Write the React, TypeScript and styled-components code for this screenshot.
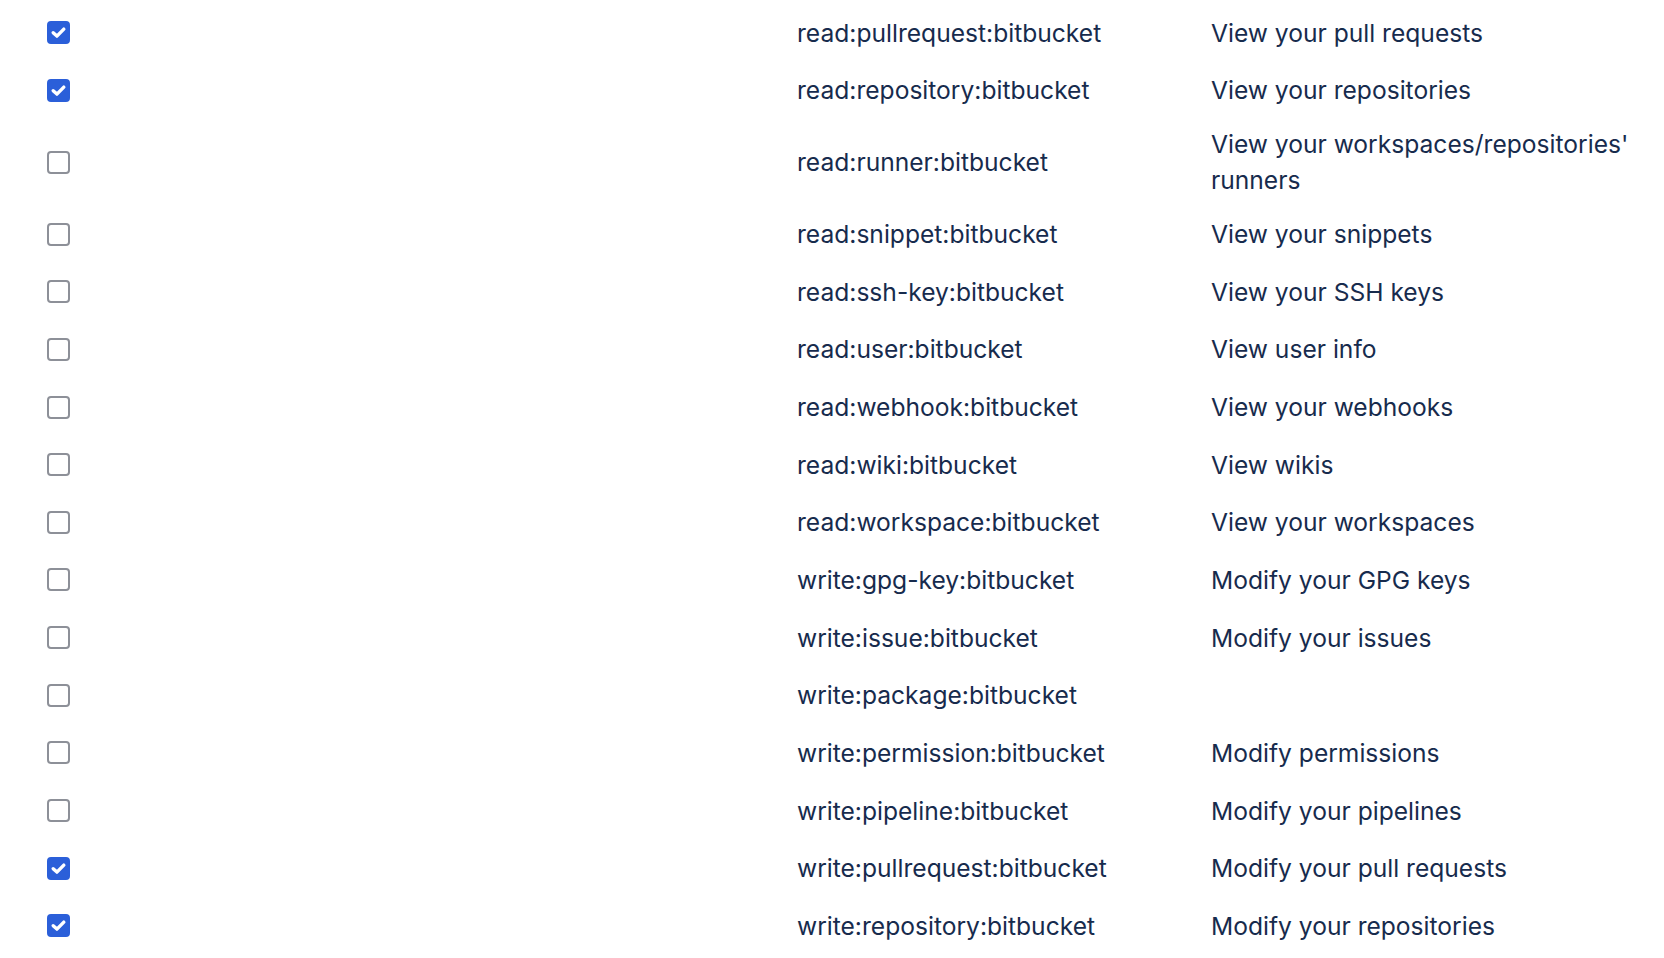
import React from 'react'
import styled, { createGlobalStyle } from 'styled-components'

interface Scope {
  name: string
  description?: string
  checked: boolean
}

const scopes: Scope[] = [
  { name: 'read:pullrequest:bitbucket', description: 'View your pull requests', checked: true },
  { name: 'read:repository:bitbucket', description: 'View your repositories', checked: true },
  { name: 'read:runner:bitbucket', description: "View your workspaces/repositories' runners", checked: false },
  { name: 'read:snippet:bitbucket', description: 'View your snippets', checked: false },
  { name: 'read:ssh-key:bitbucket', description: 'View your SSH keys', checked: false },
  { name: 'read:user:bitbucket', description: 'View user info', checked: false },
  { name: 'read:webhook:bitbucket', description: 'View your webhooks', checked: false },
  { name: 'read:wiki:bitbucket', description: 'View wikis', checked: false },
  { name: 'read:workspace:bitbucket', description: 'View your workspaces', checked: false },
  { name: 'write:gpg-key:bitbucket', description: 'Modify your GPG keys', checked: false },
  { name: 'write:issue:bitbucket', description: 'Modify your issues', checked: false },
  { name: 'write:package:bitbucket', checked: false },
  { name: 'write:permission:bitbucket', description: 'Modify permissions', checked: false },
  { name: 'write:pipeline:bitbucket', description: 'Modify your pipelines', checked: false },
  { name: 'write:pullrequest:bitbucket', description: 'Modify your pull requests', checked: true },
  { name: 'write:repository:bitbucket', description: 'Modify your repositories', checked: true },
]

const GlobalStyle = createGlobalStyle`
  html, body {
    margin: 0;
    padding: 0;
    background: #ffffff;
  }
  body {
    font-family: Inter, "Noto Sans", "Liberation Sans", sans-serif;
    color: #172b4d;
    -webkit-font-smoothing: antialiased;
  }
`

const ScopeTable = styled.div`
  display: flex;
  flex-direction: column;
  padding: 4px 14px 0 47px;
`

const ScopeRow = styled.div`
  display: grid;
  grid-template-columns: 750px 414px 1fr;
  align-items: center;
  min-height: 57.65px;
`

const CheckCell = styled.div`
  display: flex;
  align-items: center;
`

const TextCell = styled.div`
  font-size: 24.6px;
  line-height: 36px;
  padding: 7px 0;
  color: #172b4d;
`

const Box = styled.span<{ $checked: boolean }>`
  display: inline-flex;
  align-items: center;
  justify-content: center;
  box-sizing: border-box;
  width: 23px;
  height: 23px;
  border-radius: 4px;
  border: 2px solid ${p => (p.$checked ? '#2b5fd9' : '#8d9098')};
  background: ${p => (p.$checked ? '#2b5fd9' : '#ffffff')};
`

const Checkbox: React.FC<{ checked: boolean }> = ({ checked }) => (
  <Box $checked={checked} role="checkbox" aria-checked={checked}>
    {checked && (
      <svg width="17" height="17" viewBox="0 0 16 16">
        <path
          d="M3 8.2 L6.5 11.4 L13 4.8"
          fill="none"
          stroke="#ffffff"
          strokeWidth="3.2"
          strokeLinecap="round"
          strokeLinejoin="round"
        />
      </svg>
    )}
  </Box>
)

const App: React.FC = () => {
  return (
    <>
      <GlobalStyle />
      <ScopeTable>
        {scopes.map(scope => (
          <ScopeRow key={scope.name}>
            <CheckCell>
              <Checkbox checked={scope.checked} />
            </CheckCell>
            <TextCell>{scope.name}</TextCell>
            <TextCell>{scope.description ?? ''}</TextCell>
          </ScopeRow>
        ))}
      </ScopeTable>
    </>
  )
}

export default App
